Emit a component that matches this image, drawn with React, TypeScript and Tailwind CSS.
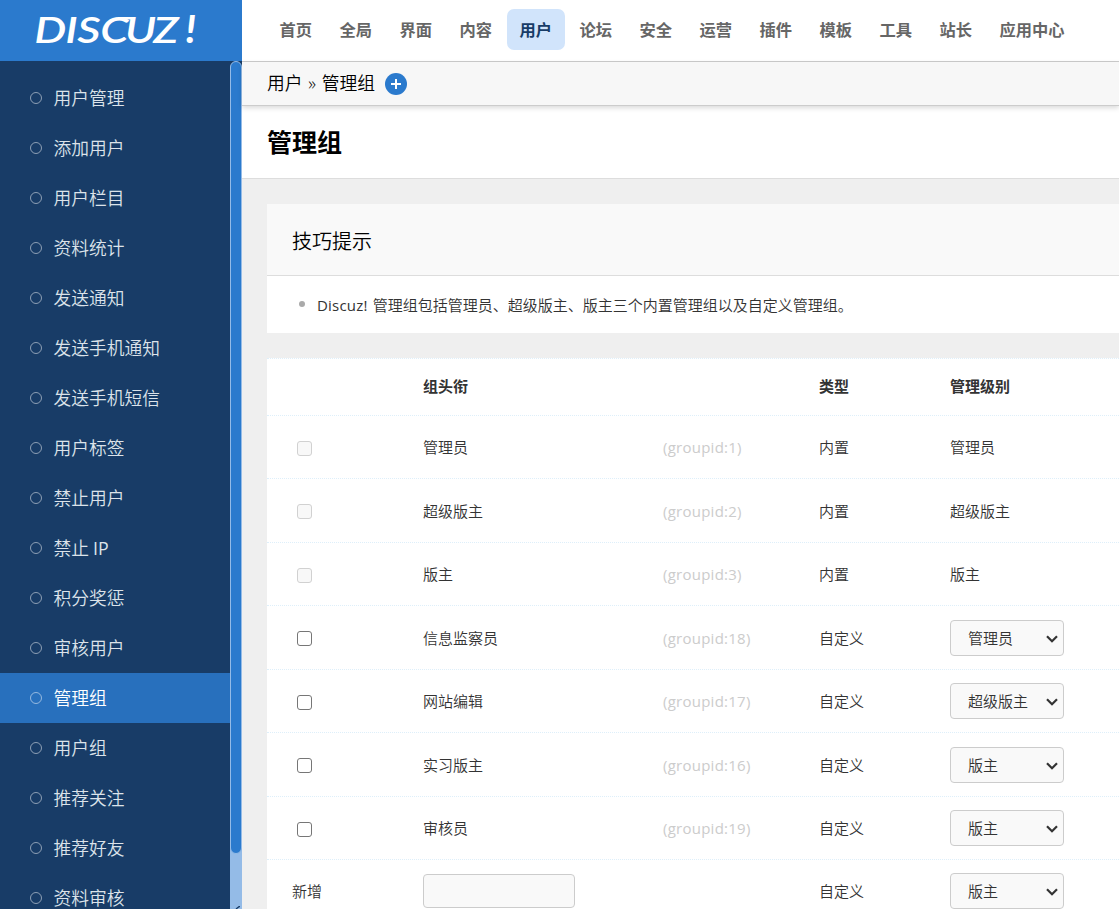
import { useState } from 'react'
import { clsx } from 'clsx'

const navItems = ['首页', '全局', '界面', '内容', '用户', '论坛', '安全', '运营', '插件', '模板', '工具', '站长', '应用中心']

const menuItems = [
  '用户管理',
  '添加用户',
  '用户栏目',
  '资料统计',
  '发送通知',
  '发送手机通知',
  '发送手机短信',
  '用户标签',
  '禁止用户',
  '禁止 IP',
  '积分奖惩',
  '审核用户',
  '管理组',
  '用户组',
  '推荐关注',
  '推荐好友',
  '资料审核',
]

const levels = ['管理员', '超级版主', '版主']

interface Group {
  id: number
  title: string
  level: string
  builtIn: boolean
}

const groups: Group[] = [
  { id: 1, title: '管理员', level: '管理员', builtIn: true },
  { id: 2, title: '超级版主', level: '超级版主', builtIn: true },
  { id: 3, title: '版主', level: '版主', builtIn: true },
  { id: 18, title: '信息监察员', level: '管理员', builtIn: false },
  { id: 17, title: '网站编辑', level: '超级版主', builtIn: false },
  { id: 16, title: '实习版主', level: '版主', builtIn: false },
  { id: 19, title: '审核员', level: '版主', builtIn: false },
]

const rowClass =
  'grid shrink-0 grid-cols-[131px_240px_156px_131px_1fr] items-center border-b border-dotted border-[#deeffa] *:pl-[25px]'

function Logo() {
  return (
    <div className="h-[61px] shrink-0 bg-[#2b7acd]">
      <svg className="block h-full w-full" viewBox="0 0 242 61" fill="#fff">
        <text
          transform="scale(1.26 1)"
          x="27.2 51.8 61.4 79.6 99.2 121.6"
          y="43"
          className="font-['Lato'] text-[36px] font-semibold italic"
        >
          DISCUZ
        </text>
        {/* bar joining the C and the U */}
        <path d="M119 17h15l-1 2.4h-15z" />
        <text x="185.5" y="43" className="font-['Lato'] text-[38px] font-black italic">
          !
        </text>
      </svg>
    </div>
  )
}

function Sidebar() {
  const [active, setActive] = useState('管理组')

  return (
    <aside className="flex w-[242px] shrink-0 flex-col">
      <Logo />
      <div className="flex min-h-0 flex-1">
        <ul className="w-[230px] overflow-hidden bg-[#183c67] pt-3">
          {menuItems.map((item) => {
            const [label, suffix] = item.split(' ')
            return (
              <li key={item}>
                <a
                  onClick={() => setActive(item)}
                  className={clsx(
                    'flex h-[50px] cursor-pointer items-center pl-[30px] text-[17.75px]',
                    item === active ? 'bg-[#2870bd] text-white' : 'text-[#dce3ea]'
                  )}
                >
                  <span className="mr-[11.5px] size-3 rounded-full border border-white/50" />
                  {label}
                  {suffix && <span className="ml-1 font-normal">{suffix}</span>}
                </a>
              </li>
            )
          })}
        </ul>
        {/* scrollbar */}
        <div className="flex w-3 flex-col justify-between bg-[#94bbe7]">
          <div className="flex h-[793px] bg-[linear-gradient(#183c67_50%,#94bbe7_50%)]">
            <div className="w-3 rounded-full border border-[#94bbe7] bg-[#2b7acd]" />
          </div>
          <svg className="h-[3px] w-3" viewBox="0 0 12 3" fill="none" stroke="#183c67" strokeWidth="1.3">
            <path d="M6 3l3-2.3h1" />
          </svg>
        </div>
      </div>
    </aside>
  )
}

function TopNav() {
  return (
    <nav className="flex h-[62px] shrink-0 items-start gap-[2.5px] border-b border-[#ccc] bg-white pt-[9px] pl-[25px]">
      {navItems.map((item) => (
        <a
          key={item}
          className={clsx(
            'flex h-[41px] items-center rounded-[7px] px-[12.5px] pt-0.5 text-[16.25px] font-bold whitespace-nowrap',
            item === '用户' ? 'bg-[#d1e4fb] text-[#183c67]' : 'text-[#666]'
          )}
        >
          {item}
        </a>
      ))}
    </nav>
  )
}

function Breadcrumb() {
  return (
    <div className="relative flex h-11 shrink-0 items-center border-b border-[#ccc] bg-[#f7f7f7] pl-[25px] text-[17.75px] text-black shadow-[0_2px_5px_rgba(0,0,0,0.15)]">
      <span className="[word-spacing:1.2px]">用户 » 管理组</span>
      <button className="ml-2.5 flex size-[22px] items-center justify-center rounded-full bg-[#2b7acd]">
        <svg className="size-2.5" viewBox="0 0 10 10" stroke="#fff" strokeWidth="2">
          <path d="M5 0v10M0 5h10" />
        </svg>
      </button>
    </div>
  )
}

function LevelSelect({ value }: { value: string }) {
  return (
    <div className="relative w-[114px]">
      <select
        defaultValue={value}
        className="block h-9 w-full appearance-none rounded-[4px] border border-[#ccc] bg-[#f9f9f9] pl-[17px] text-[15px] text-[#333]"
      >
        {levels.map((level) => (
          <option key={level}>{level}</option>
        ))}
      </select>
      <svg
        className="pointer-events-none absolute top-[15px] right-[6px] h-2 w-3"
        viewBox="0 0 12 8"
        fill="none"
        stroke="#333"
        strokeWidth="2.2"
      >
        <path d="M1 1.2l5 5 5-5" />
      </svg>
    </div>
  )
}

function GroupRow({ group }: { group: Group }) {
  return (
    <div className={clsx(rowClass, 'h-[63.5px] pt-px')}>
      <div className="pt-0.5">
        <input
          type="checkbox"
          disabled={group.builtIn}
          className="ml-[5px] block size-[15px] appearance-none rounded-[3px] border border-[#767676] bg-white checked:bg-[#2b7acd] disabled:border-[#d1d1d1] disabled:bg-[#f8f8f8]"
        />
      </div>
      <div>{group.title}</div>
      <div className="font-normal tracking-[0.25px] text-[#ccc]">(groupid:{group.id})</div>
      <div>{group.builtIn ? '内置' : '自定义'}</div>
      <div>{group.builtIn ? group.level : <LevelSelect value={group.level} />}</div>
    </div>
  )
}

export default function App() {
  return (
    <div className="flex h-screen overflow-hidden bg-[#efefef] font-['Open_Sans','Noto_Sans_CJK_SC',sans-serif] text-[15px] font-[350] text-[#333]">
      <Sidebar />
      <div className="flex min-w-0 flex-1 flex-col">
        <TopNav />
        <Breadcrumb />
        <h1 className="flex h-[73px] shrink-0 items-center border-b border-[#ddd] bg-white pt-0.5 pl-[25px] text-[25px] font-bold text-black">
          管理组
        </h1>

        <main className="flex min-h-0 flex-1 flex-col gap-[25px] overflow-hidden pt-[25px] pl-[25px]">
          <section className="h-[129px] shrink-0 bg-white">
            <h2 className="flex h-[72px] items-center border-b border-[#ddd] bg-[#f9f9f9] pt-1 pl-[25px] text-[20px] font-[350] text-black">
              技巧提示
            </h2>
            <ul>
              <li className="flex h-[57px] items-center pl-8">
                <span className="mr-3 mb-0.5 size-[6px] rounded-full bg-[#aaa]" />
                <span className="pt-0.5 [word-spacing:1px]">
                  <span className="font-normal tracking-[0.2px]">Discuz! </span>
                  管理组包括管理员、超级版主、版主三个内置管理组以及自定义管理组。
                </span>
              </li>
            </ul>
          </section>

          <section className="flex flex-col bg-white">
            <div className={clsx(rowClass, 'h-[57.5px] border-t pb-0.5 font-bold')}>
              <div />
              <div>组头衔</div>
              <div />
              <div>类型</div>
              <div>管理级别</div>
            </div>
            {groups.map((group) => (
              <GroupRow key={group.id} group={group} />
            ))}
            <div className={clsx(rowClass, 'h-[63.5px]')}>
              <div>新增</div>
              <div>
                <input
                  type="text"
                  className="block h-[34px] w-[152px] rounded-[4px] border border-[#ccc] bg-[#f9f9f9] px-2"
                />
              </div>
              <div />
              <div>自定义</div>
              <div>
                <LevelSelect value="版主" />
              </div>
            </div>
          </section>
        </main>
      </div>
    </div>
  )
}
